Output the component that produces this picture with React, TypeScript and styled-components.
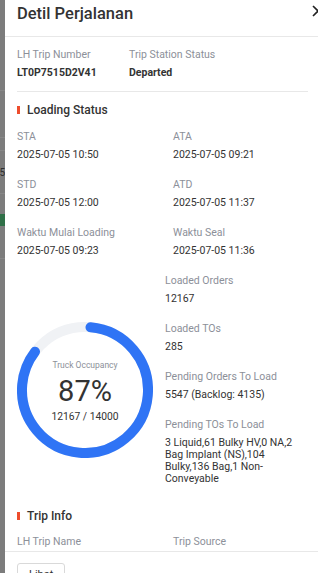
import { createGlobalStyle, styled } from "styled-components";

const GlobalStyle = createGlobalStyle`
    html, body {
        margin: 0;
        padding: 0;
        overflow: hidden;
        background: #7c7c7c;
    }
    body {
        font-family: Roboto, "Liberation Sans", Arial, sans-serif;
        color: #333;
    }
`;

const Page = styled.div`
    display: flex;
    width: 318px;
    height: 573px;
    overflow: hidden;
`;

const Backdrop = styled.div`
    width: 5px;
    flex-shrink: 0;
    display: flex;
    flex-direction: column;
    background: #7c7c7c;
`;

const BackdropRow = styled.div<{ $h: number; $green?: boolean; $line?: boolean }>`
    height: ${(p) => p.$h}px;
    flex-shrink: 0;
    background: ${(p) => (p.$green ? "#2f6f47" : "transparent")};
    border-bottom: ${(p) => (p.$line ? "1px solid #878787" : "none")};
    box-sizing: border-box;
    font-size: 10px;
    line-height: ${(p) => p.$h}px;
    color: #2e2e2e;
    white-space: nowrap;
    direction: rtl;
    overflow: hidden;
`;

const Drawer = styled.div`
    width: 320px;
    height: 598px;
    flex-shrink: 0;
    display: flex;
    flex-direction: column;
    background: #fff;
`;

const Header = styled.div`
    height: 36px;
    flex-shrink: 0;
    display: flex;
    align-items: center;
    justify-content: space-between;
    padding: 0 1px 0 12px;
    border-bottom: 1px solid #e8e8e8;
`;

const Title = styled.div`
    font-size: 16.5px;
    font-weight: 500;
    color: #333;
    padding-bottom: 9px;
`;

const CloseButton = styled.button`
    display: flex;
    border: none;
    background: none;
    padding: 0;
    margin-bottom: 14px;
    color: #222;
`;

const Body = styled.div`
    flex: 1;
    min-height: 0;
    overflow: hidden;
    padding: 0 17px 0 12px;
`;

const TopRow = styled.div`
    display: grid;
    grid-template-columns: 112px 1fr;
    padding-top: 9px;
`;

const Divider = styled.div`
    height: 1px;
    background: #e8e8e8;
    margin-top: 9px;
`;

const SectionTitle = styled.div<{ $top: number }>`
    display: flex;
    align-items: center;
    gap: 7px;
    margin-top: ${(p) => p.$top}px;
    height: 20px;
    font-size: 12px;
    font-weight: 500;
    color: #333;

    &::before {
        content: "";
        width: 3px;
        height: 8px;
        background: #ee4d2d;
    }
`;

const InfoGrid = styled.div<{ $top: number }>`
    display: grid;
    grid-template-columns: 156px 1fr;
    row-gap: 12px;
    margin-top: ${(p) => p.$top}px;
`;

const Label = styled.div`
    font-size: 10.5px;
    line-height: 18px;
    color: #8c9099;
`;

const Value = styled.div<{ $bold?: boolean }>`
    font-size: 10.5px;
    line-height: 18px;
    color: #333;
    font-weight: ${(p) => (p.$bold ? 700 : 400)};
`;

const ChartRow = styled.div`
    display: grid;
    grid-template-columns: 136px 1fr;
    column-gap: 12px;
    margin-top: 12px;
`;

const ChartColumn = styled.div`
    display: flex;
    align-items: center;
    justify-content: center;
`;

const Donut = styled.div`
    display: grid;
    width: 136px;
    height: 136px;
    margin-top: 20px;

    & > * {
        grid-area: 1 / 1;
    }
`;

const DonutCenter = styled.div`
    display: flex;
    flex-direction: column;
    align-items: center;
    justify-content: center;
    padding-top: 2px;
`;

const DonutCaption = styled.div`
    font-size: 8.5px;
    color: #8c9099;
`;

const DonutPercent = styled.div`
    font-size: 29px;
    line-height: 34px;
    margin-top: 4px;
    color: #333;
`;

const DonutCount = styled.div`
    font-size: 10.3px;
    color: #333;
    margin-top: 2px;
`;

const StatColumn = styled.div`
    display: flex;
    flex-direction: column;
    gap: 12px;
`;

const StatValue = styled.div`
    font-size: 10.5px;
    line-height: 12px;
    padding: 3px 0;
    color: #333;
`;

const Footer = styled.div`
    flex-shrink: 0;
    border-top: 1px solid #e8e8e8;
    padding: 11px 12px;
`;

const Button = styled.button`
    height: 24px;
    padding: 0 11px;
    border: 1px solid #d9d9d9;
    border-radius: 3px;
    background: #fff;
    font-family: inherit;
    font-size: 11px;
    line-height: 22px;
    color: #333;
`;

const R = 63;
const CIRC = 2 * Math.PI * R;
const START_DEG = 5;
const SWEEP_DEG = 302;

function Occupancy() {
    return (
        <Donut>
            <svg width="136" height="136" viewBox="0 0 136 136">
                <circle cx="68" cy="68" r={R} fill="none" stroke="#f0f2f5" strokeWidth="10" />
                <circle
                    cx="68"
                    cy="68"
                    r={R}
                    fill="none"
                    stroke="#2f74f5"
                    strokeWidth="10"
                    strokeLinecap="round"
                    strokeDasharray={`${(CIRC * SWEEP_DEG) / 360} ${CIRC}`}
                    transform={`rotate(${START_DEG - 90} 68 68)`}
                />
            </svg>
            <DonutCenter>
                <DonutCaption>Truck Occupancy</DonutCaption>
                <DonutPercent>87%</DonutPercent>
                <DonutCount>12167 / 14000</DonutCount>
            </DonutCenter>
        </Donut>
    );
}

const loadingTimes = [
    ["STA", "2025-07-05 10:50"],
    ["ATA", "2025-07-05 09:21"],
    ["STD", "2025-07-05 12:00"],
    ["ATD", "2025-07-05 11:37"],
    ["Waktu Mulai Loading", "2025-07-05 09:23"],
    ["Waktu Seal", "2025-07-05 11:36"],
];

const stats = [
    ["Loaded Orders", "12167"],
    ["Loaded TOs", "285"],
    ["Pending Orders To Load", "5547 (Backlog: 4135)"],
    ["Pending TOs To Load", "3 Liquid,61 Bulky HV,0 NA,2 Bag Implant (NS),104 Bulky,136 Bag,1 Non-Conveyable"],
];

export default function App() {
    return (
        <>
            <GlobalStyle />
            <Page>
                <Backdrop>
                    <BackdropRow $h={91} $line />
                    <BackdropRow $h={47} $line />
                    <BackdropRow $h={13} $line />
                    <BackdropRow $h={43} $line>2025-c0</BackdropRow>
                    <BackdropRow $h={20} />
                    <BackdropRow $h={12} $green />
                    <BackdropRow $h={33} $line />
                </Backdrop>
                <Drawer>
                    <Header>
                        <Title>Detil Perjalanan</Title>
                        <CloseButton aria-label="close">
                            <svg width="12" height="12" viewBox="0 0 12 12">
                                <path d="M1 1 L11 11 M11 1 L1 11" stroke="currentColor" strokeWidth="1.6" />
                            </svg>
                        </CloseButton>
                    </Header>
                    <Body>
                        <TopRow>
                            <Label>LH Trip Number</Label>
                            <Label>Trip Station Status</Label>
                            <Value $bold>LT0P7515D2V41</Value>
                            <Value $bold>Departed</Value>
                        </TopRow>
                        <Divider />

                        <SectionTitle $top={8}>Loading Status</SectionTitle>
                        <InfoGrid $top={8}>
                            {loadingTimes.map(([label, value]) => (
                                <div key={label}>
                                    <Label>{label}</Label>
                                    <Value>{value}</Value>
                                </div>
                            ))}
                        </InfoGrid>

                        <ChartRow>
                            <ChartColumn>
                                <Occupancy />
                            </ChartColumn>
                            <StatColumn>
                                {stats.map(([label, value]) => (
                                    <div key={label}>
                                        <Label>{label}</Label>
                                        <StatValue>{value}</StatValue>
                                    </div>
                                ))}
                            </StatColumn>
                        </ChartRow>

                        <SectionTitle $top={18}>Trip Info</SectionTitle>
                        <InfoGrid $top={7}>
                            <Label>LH Trip Name</Label>
                            <Label>Trip Source</Label>
                        </InfoGrid>
                    </Body>
                    <Footer>
                        <Button>Lihat</Button>
                    </Footer>
                </Drawer>
            </Page>
        </>
    );
}
